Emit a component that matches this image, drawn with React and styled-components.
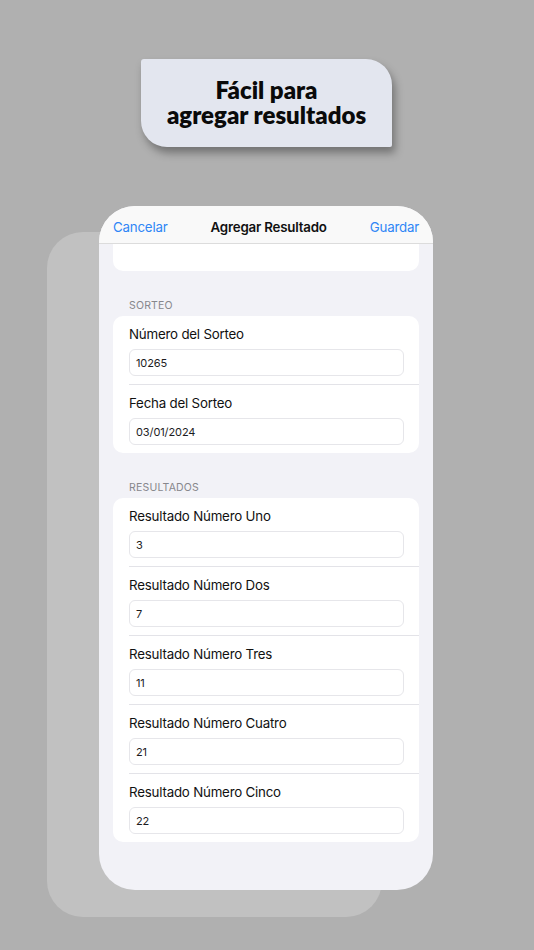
import React from "react";
import styled, { createGlobalStyle } from "styled-components";

const Global = createGlobalStyle`
  html, body { margin: 0; padding: 0; background: #b0b0b0; }
  body { font-family: Inter, "Noto Sans", "Liberation Sans", sans-serif; -webkit-font-smoothing: antialiased; }
  * { box-sizing: border-box; }
`;

const Page = styled.div`
  width: 534px;
  height: 950px;
  overflow: hidden;
  background: #b0b0b0;
  padding-top: 59px;
`;

const Banner = styled.div`
  margin-left: 141px;
  width: 251px;
  height: 88px;
  background: #e3e6ef;
  border-radius: 3px 26px 2px 26px;
  box-shadow: 3px 6px 9px rgba(0, 0, 0, 0.35);
  display: flex;
  align-items: center;
  justify-content: center;
  font-family: Lato, "Noto Sans", sans-serif;
  font-weight: 800;
  font-size: 24px;
  line-height: 25px;
  color: #0a0a0a;
  text-align: center;
  padding-bottom: 2px;
`;

const Stage = styled.div`
  margin-top: 59px;
  display: grid;
`;

const BackCard = styled.div`
  grid-area: 1 / 1;
  margin-top: 26px;
  margin-left: 47px;
  width: 335px;
  height: 685px;
  background: #c1c1c1;
  border-radius: 36px;
`;

const Sheet = styled.div`
  grid-area: 1 / 1;
  position: relative;
  z-index: 1;
  margin-left: 99px;
  width: 334px;
  height: 684px;
  background: #f2f2f7;
  border-radius: 36px;
  overflow: hidden;
  display: flex;
  flex-direction: column;
`;

const NavBar = styled.div`
  height: 38px;
  flex: none;
  background: #f9f9f9;
  border-bottom: 1px solid #dcdcdc;
  display: flex;
  align-items: center;
  justify-content: space-between;
  padding: 5px 14px 0 14px;
`;

const NavButton = styled.span`
  color: #2f86f6;
  font-size: 13.3px;
  letter-spacing: -0.2px;
`;

const NavTitle = styled.span`
  color: #111;
  font-size: 13.3px;
  letter-spacing: -0.2px;
  font-weight: 600;
`;

const Content = styled.div`
  padding: 0 14px;
  display: flex;
  flex-direction: column;
`;

const StubCard = styled.div`
  height: 27px;
  background: #fff;
  border-radius: 0 0 10px 10px;
`;

const SectionLabel = styled.div`
  margin-top: 28px;
  margin-bottom: 3px;
  padding-left: 16px;
  height: 14px;
  line-height: 14px;
  font-size: 10.5px;
  letter-spacing: 0.2px;
  color: #87878c;
  text-transform: uppercase;
`;

const Card = styled.div`
  background: #fff;
  border-radius: 10px;
  display: flex;
  flex-direction: column;
`;

const Row = styled.div`
  height: ${(p) => (p.$first ? "68px" : "69px")};
  padding: 9px 15px 0 0;
  display: flex;
  flex-direction: column;
  gap: 6px;
  border-top: ${(p) => (p.$first ? "none" : "1px solid #e3e3e8")};
  margin-left: 16px;
`;

const Label = styled.div`
  height: 18px;
  line-height: 18px;
  font-size: 13.3px;
  letter-spacing: -0.2px;
  color: #111;
`;

const Field = styled.div`
  height: 27px;
  background: #fff;
  border: 1px solid #e6e6ea;
  border-radius: 6px;
  display: flex;
  align-items: center;
  padding-left: 6px;
  font-size: 11px;
  letter-spacing: -0.1px;
  color: #1c1c1e;
`;

const sorteo = [
  ["Número del Sorteo", "10265"],
  ["Fecha del Sorteo", "03/01/2024"],
];

const resultados = [
  ["Resultado Número Uno", "3"],
  ["Resultado Número Dos", "7"],
  ["Resultado Número Tres", "11"],
  ["Resultado Número Cuatro", "21"],
  ["Resultado Número Cinco", "22"],
];

function Section({ title, rows }) {
  return (
    <>
      <SectionLabel>{title}</SectionLabel>
      <Card>
        {rows.map(([l, v], i) => (
          <Row key={l} $first={i === 0}>
            <Label>{l}</Label>
            <Field>{v}</Field>
          </Row>
        ))}
      </Card>
    </>
  );
}

export default function App() {
  return (
    <Page>
      <Global />
      <Banner>
        Fácil para
        <br />
        agregar resultados
      </Banner>
      <Stage>
        <BackCard />
        <Sheet>
          <NavBar>
            <NavButton>Cancelar</NavButton>
            <NavTitle>Agregar Resultado</NavTitle>
            <NavButton>Guardar</NavButton>
          </NavBar>
          <Content>
            <StubCard />
            <Section title="Sorteo" rows={sorteo} />
            <Section title="Resultados" rows={resultados} />
          </Content>
        </Sheet>
      </Stage>
    </Page>
  );
}
